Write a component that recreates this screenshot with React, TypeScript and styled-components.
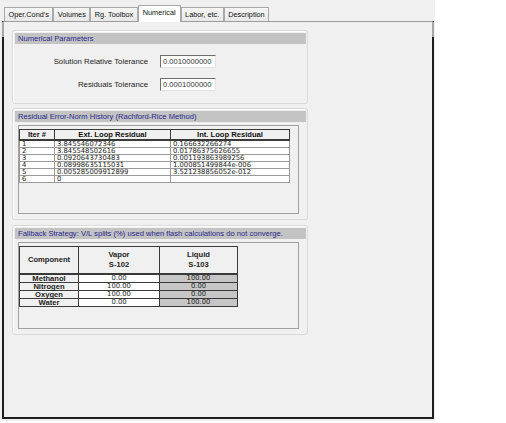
import { FC } from "react";
import styled, { createGlobalStyle } from "styled-components";

const GlobalStyle = createGlobalStyle`
  html, body {
    margin: 0;
    padding: 0;
    background: #ffffff;
  }
  body {
    font-family: "Liberation Sans", Arial, sans-serif;
    color: #111;
  }
`;

const tabs = ["Oper.Cond's", "Volumes", "Rg. Toolbox", "Numerical", "Labor, etc.", "Description"];

const residuals = [
  ["1", "3.845546072346", "0.166632266274"],
  ["2", "3.845548502616", "0.01786375626655"],
  ["3", "0.0920643730483", "0.001193863989256"],
  ["4", "0.08998635115031", "1.000851499844e-006"],
  ["5", "0.005285009912899", "3.521238856052e-012"],
  ["6", "0", ""],
];

const splits = [
  ["Methanol", "0.00", "100.00"],
  ["Nitrogen", "100.00", "0.00"],
  ["Oxygen", "100.00", "0.00"],
  ["Water", "0.00", "100.00"],
];

const App: FC = () => {
  return (
    <>
      <GlobalStyle />
      <Window>
        <TabStrip>
          {tabs.map((t) => (
            <Tab key={t} $active={t === "Numerical"}>
              {t}
            </Tab>
          ))}
        </TabStrip>
        <Panel>
          <Group>
            <GroupHeader>Numerical Parameters</GroupHeader>
            <ParamGrid>
              <ParamLabel>Solution Relative Tolerance</ParamLabel>
              <ParamInput>0.0010000000</ParamInput>
              <ParamLabel>Residuals Tolerance</ParamLabel>
              <ParamInput>0.0001000000</ParamInput>
            </ParamGrid>
          </Group>

          <Group>
            <GroupHeader>Residual Error-Norm History (Rachford-Rice Method)</GroupHeader>
            <Frame $height={89}>
              <ResidualTable>
                <colgroup>
                  <col style={{ width: 35 }} />
                  <col style={{ width: 116 }} />
                  <col style={{ width: 119 }} />
                </colgroup>
                <thead>
                  <tr>
                    <ResHead>Iter #</ResHead>
                    <ResHead>Ext. Loop Residual</ResHead>
                    <ResHead>Int. Loop Residual</ResHead>
                  </tr>
                </thead>
                <tbody>
                  {residuals.map((r) => (
                    <tr key={r[0]}>
                      {r.map((v, i) => (
                        <ResCell key={i}>{v}</ResCell>
                      ))}
                    </tr>
                  ))}
                </tbody>
              </ResidualTable>
            </Frame>
          </Group>

          <Group $gapTop={1}>
            <GroupHeader>
              Fallback Strategy: V/L splits (%) used when flash calculations do not converge.
            </GroupHeader>
            <Frame $height={87}>
              <SplitTable>
                <colgroup>
                  <col style={{ width: 59 }} />
                  <col style={{ width: 81 }} />
                  <col style={{ width: 78 }} />
                </colgroup>
                <thead>
                  <tr>
                    <SplitHead>Component</SplitHead>
                    <SplitHead>
                      Vapor
                      <br />
                      S-102
                    </SplitHead>
                    <SplitHead>
                      Liquid
                      <br />
                      S-103
                    </SplitHead>
                  </tr>
                </thead>
                <tbody>
                  {splits.map((s) => (
                    <tr key={s[0]}>
                      <SplitName>{s[0]}</SplitName>
                      <SplitCell $tone="white">{s[1]}</SplitCell>
                      <SplitCell $tone="gray">{s[2]}</SplitCell>
                    </tr>
                  ))}
                </tbody>
              </SplitTable>
            </Frame>
          </Group>
        </Panel>
      </Window>
    </>
  );
};

export default App;

const Window = styled.div`
  width: 435px;
  height: 421px;
  background: #f0f0f0;
  display: flex;
  flex-direction: column;
`;

const TabStrip = styled.div`
  display: flex;
  align-items: flex-end;
  height: 21px;
  padding-left: 4px;
  position: relative;
  z-index: 1;
`;

const Tab = styled.div<{ $active?: boolean }>`
  box-sizing: border-box;
  height: ${(p) => (p.$active ? 17 : 14)}px;
  margin-bottom: ${(p) => (p.$active ? -1 : 0)}px;
  padding: ${(p) => (p.$active ? "2px 4px 0" : "2px 3.5px 0")};
  border: 1px solid #a9a9a9;
  border-bottom: none;
  background: ${(p) => (p.$active ? "#ffffff" : "linear-gradient(#f6f6f6, #e8e8e8)")};
  font-size: 7.3px;
  line-height: 9px;
  color: #111;
  white-space: nowrap;
  & + & {
    border-left: ${(p) => (p.$active ? "1px solid #a9a9a9" : "none")};
  }
`;

const Panel = styled.div`
  position: relative;
  flex: 1;
  box-sizing: border-box;
  margin: 0 1px 2px 2px;
  border-top: 1px solid #9c9c9c;
  border-left: 2px solid #1e1e1e;
  border-right: 2px solid #1e1e1e;
  border-bottom: 2px solid #1e1e1e;
  padding: 8px 0 0 8px;
  display: flex;
  flex-direction: column;
  gap: 4px;
  &::before,
  &::after {
    content: "";
    position: absolute;
    top: 0;
    width: 2px;
    height: 15px;
    background: #a8a8a8;
  }
  &::before {
    left: -2px;
  }
  &::after {
    right: -2px;
  }
`;

const Group = styled.div<{ $gapTop?: number }>`
  width: 296px;
  box-sizing: border-box;
  margin-top: ${(p) => p.$gapTop ?? 0}px;
  border: 1px solid #d9d9d9;
  border-radius: 3px;
  box-shadow: inset 1px 1px 0 #ffffff;
  padding: 2px 1px 5px 2px;
`;

const GroupHeader = styled.div`
  height: 11px;
  line-height: 11px;
  background: #c3c3c3;
  color: #27278a;
  font-size: 7.6px;
  padding-left: 3px;
  white-space: nowrap;
  overflow: hidden;
`;

const ParamGrid = styled.div`
  display: grid;
  grid-template-columns: 133px 56px;
  column-gap: 12px;
  row-gap: 10px;
  align-items: center;
  padding: 11px 0 7px;
`;

const ParamLabel = styled.div`
  text-align: right;
  font-size: 7.8px;
  color: #222;
`;

const ParamInput = styled.div`
  box-sizing: border-box;
  height: 13px;
  background: #ffffff;
  border-top: 1px solid #6e6e6e;
  border-left: 1px solid #6e6e6e;
  border-right: 1px solid #e3e3e3;
  border-bottom: 1px solid #e3e3e3;
  font-size: 7.6px;
  line-height: 11px;
  padding-left: 2px;
  color: #333;
`;

const Frame = styled.div<{ $height: number }>`
  box-sizing: border-box;
  height: ${(p) => p.$height}px;
  margin: 3px 7px 0 3px;
  border: 1px solid #a0a0a0;
  padding: 3px 0;
`;

const ResidualTable = styled.table`
  border-collapse: collapse;
  table-layout: fixed;
  width: 270px;
  background: #ffffff;
`;

const ResHead = styled.th`
  height: 9px;
  background: #f0f0f0;
  border: 1px solid #3a3a3a;
  border-bottom-width: 2px;
  font-size: 7.6px;
  line-height: 9px;
  font-weight: bold;
  padding: 0;
  text-align: center;
  color: #111;
`;

const ResCell = styled.td`
  height: 6px;
  border: 1px solid #9a9a9a;
  font-family: "DejaVu Sans", sans-serif;
  font-size: 6.8px;
  line-height: 6px;
  padding: 0 2px;
  color: #222;
  white-space: nowrap;
  overflow: hidden;
`;

const SplitTable = styled.table`
  border-collapse: collapse;
  table-layout: fixed;
  width: 218px;
`;

const SplitHead = styled.th`
  height: 26px;
  background: #f0f0f0;
  border: 1px solid #3a3a3a;
  border-bottom-width: 2px;
  font-size: 7.6px;
  line-height: 10px;
  font-weight: bold;
  padding: 0;
  text-align: center;
  color: #222;
`;

const SplitName = styled.td`
  height: 7px;
  background: #f0f0f0;
  border: 1px solid #3a3a3a;
  font-size: 7.6px;
  line-height: 7px;
  font-weight: bold;
  padding: 0;
  text-align: center;
  color: #222;
`;

const SplitCell = styled.td<{ $tone: "white" | "gray" }>`
  height: 7px;
  background: ${(p) => (p.$tone === "gray" ? "#c6c6c6" : "#ffffff")};
  border: 1px solid #3a3a3a;
  font-family: "DejaVu Sans", sans-serif;
  font-size: 6.8px;
  line-height: 7px;
  padding: 0;
  text-align: center;
  color: #222;
`;
